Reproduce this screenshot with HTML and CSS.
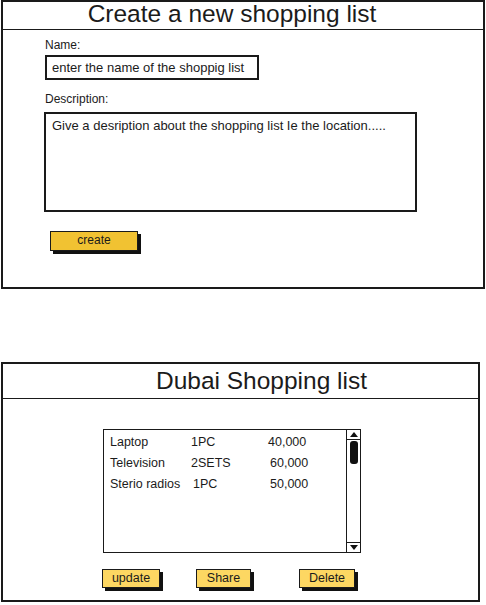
FILE: index.html
```html
<!DOCTYPE html>
<html>
<head>
<meta charset="utf-8">
<link rel="stylesheet" href="styles.css">
</head>
<body>
<div class="window win-create">
  <div class="titlebar tb-create">Create a new shopping list</div>
  <div class="form">
    <div class="label">Name:</div>
    <div class="input">enter the name of the shoppig list</div>
    <div class="label label-desc">Description:</div>
    <div class="textarea">Give a desription about the shopping list Ie the location.....</div>
    <div class="btn btn-create">create</div>
  </div>
</div>

<div class="window win-list">
  <div class="titlebar tb-list">Dubai Shopping list</div>
  <div class="list-body">
    <div class="listbox">
      <div class="rows">
        <div class="row"><span>Laptop</span><span>1PC</span><span>40,000</span></div>
        <div class="row"><span>Television</span><span>2SETS</span><span class="p2">60,000</span></div>
        <div class="row"><span>Sterio radios</span><span class="q2">1PC</span><span class="p2">50,000</span></div>
      </div>
      <div class="scrollbar">
        <div class="arrow up"><svg width="10" height="7" viewBox="0 0 10 7"><polygon points="1,6 5,1 9,6" fill="#111"/></svg></div>
        <div class="thumb"></div>
        <div class="track"></div>
        <div class="arrow down"><svg width="10" height="7" viewBox="0 0 10 7"><polygon points="1,1 5,6 9,1" fill="#111"/></svg></div>
      </div>
    </div>
    <div class="actions">
      <div class="btn btn-small btn-update">update</div>
      <div class="btn btn-small btn-share">Share</div>
      <div class="btn btn-small btn-delete">Delete</div>
    </div>
  </div>
</div>
</body>
</html>
```

FILE: styles.css
```css
html, body {
  margin: 0;
  padding: 0;
  background: #fff;
}
body {
  font-family: "Liberation Sans", Arial, sans-serif;
  color: #1b1b1b;
  width: 486px;
  height: 605px;
  overflow: hidden;
}
.window {
  box-sizing: border-box;
  border: 2px solid #1a1a1a;
  background: #fff;
}
.win-create {
  margin-left: 1px;
  width: 484px;
  height: 289px;
}
.win-list {
  margin-top: 73px;
  margin-left: 1px;
  width: 479px;
  height: 240px;
}
.titlebar {
  box-sizing: border-box;
  border-bottom: 1.5px solid #1a1a1a;
  font-size: 24.5px;
  text-align: center;
  white-space: nowrap;
}
.tb-create {
  height: 28px;
  line-height: 23px;
  padding-right: 22px;
}
.tb-list {
  height: 35px;
  line-height: 33px;
  padding-left: 42px;
}
.form {
  padding: 7px 0 0 42px;
  display: flex;
  flex-direction: column;
  align-items: flex-start;
}
.label {
  font-size: 12px;
  line-height: 16px;
}
.label-desc {
  margin-top: 11px;
}
.input {
  margin-top: 2px;
  box-sizing: border-box;
  width: 214px;
  height: 25px;
  border: 2px solid #1a1a1a;
  padding-left: 5px;
  font-size: 13px;
  line-height: 21px;
  white-space: nowrap;
}
.textarea {
  margin-top: 5px;
  margin-left: -1px;
  box-sizing: border-box;
  width: 373px;
  height: 100px;
  border: 2px solid #1a1a1a;
  padding: 3px 0 0 6px;
  font-size: 13px;
  line-height: 17px;
  white-space: nowrap;
}
.btn {
  box-sizing: border-box;
  border: 1.5px solid #1a1a1a;
  box-shadow: 3px 3px 0 #111;
  text-align: center;
  font-size: 12px;
  white-space: nowrap;
}
.btn-create {
  margin: 19px 0 0 5px;
  width: 88px;
  height: 20px;
  line-height: 17px;
  background: #f1c232;
}
.list-body {
  padding: 30px 0 0 100px;
}
.listbox {
  box-sizing: border-box;
  width: 258px;
  height: 124px;
  border: 1.5px solid #1a1a1a;
  display: flex;
}
.rows {
  flex: 1;
  padding: 2px 0 0 6px;
}
.row {
  display: grid;
  grid-template-columns: 81px 77px auto;
  font-size: 12.5px;
  line-height: 21px;
  white-space: nowrap;
}
.p2 { padding-left: 2px; }
.q2 { padding-left: 2px; }
.scrollbar {
  box-sizing: border-box;
  width: 14px;
  border-left: 1.5px solid #1a1a1a;
  display: flex;
  flex-direction: column;
  align-items: center;
}
.arrow {
  width: 100%;
  height: 9px;
  display: flex;
  align-items: center;
  justify-content: center;
}
.arrow.up { border-bottom: 1px solid #1a1a1a; }
.arrow.down { border-top: 1px solid #1a1a1a; }
.thumb {
  margin-top: 1px;
  width: 8px;
  height: 23px;
  background: #111;
  border-radius: 3px;
}
.track { flex: 1; }
.actions {
  margin-top: 16px;
  display: flex;
  align-items: flex-start;
}
.btn-small {
  height: 19px;
  line-height: 16px;
  font-size: 12.5px;
  background: #fdd762;
}
.btn-update { width: 58px; margin-left: -1px; }
.btn-share { width: 55px; margin-left: 36px; }
.btn-delete { width: 56px; margin-left: 48px; }
```
